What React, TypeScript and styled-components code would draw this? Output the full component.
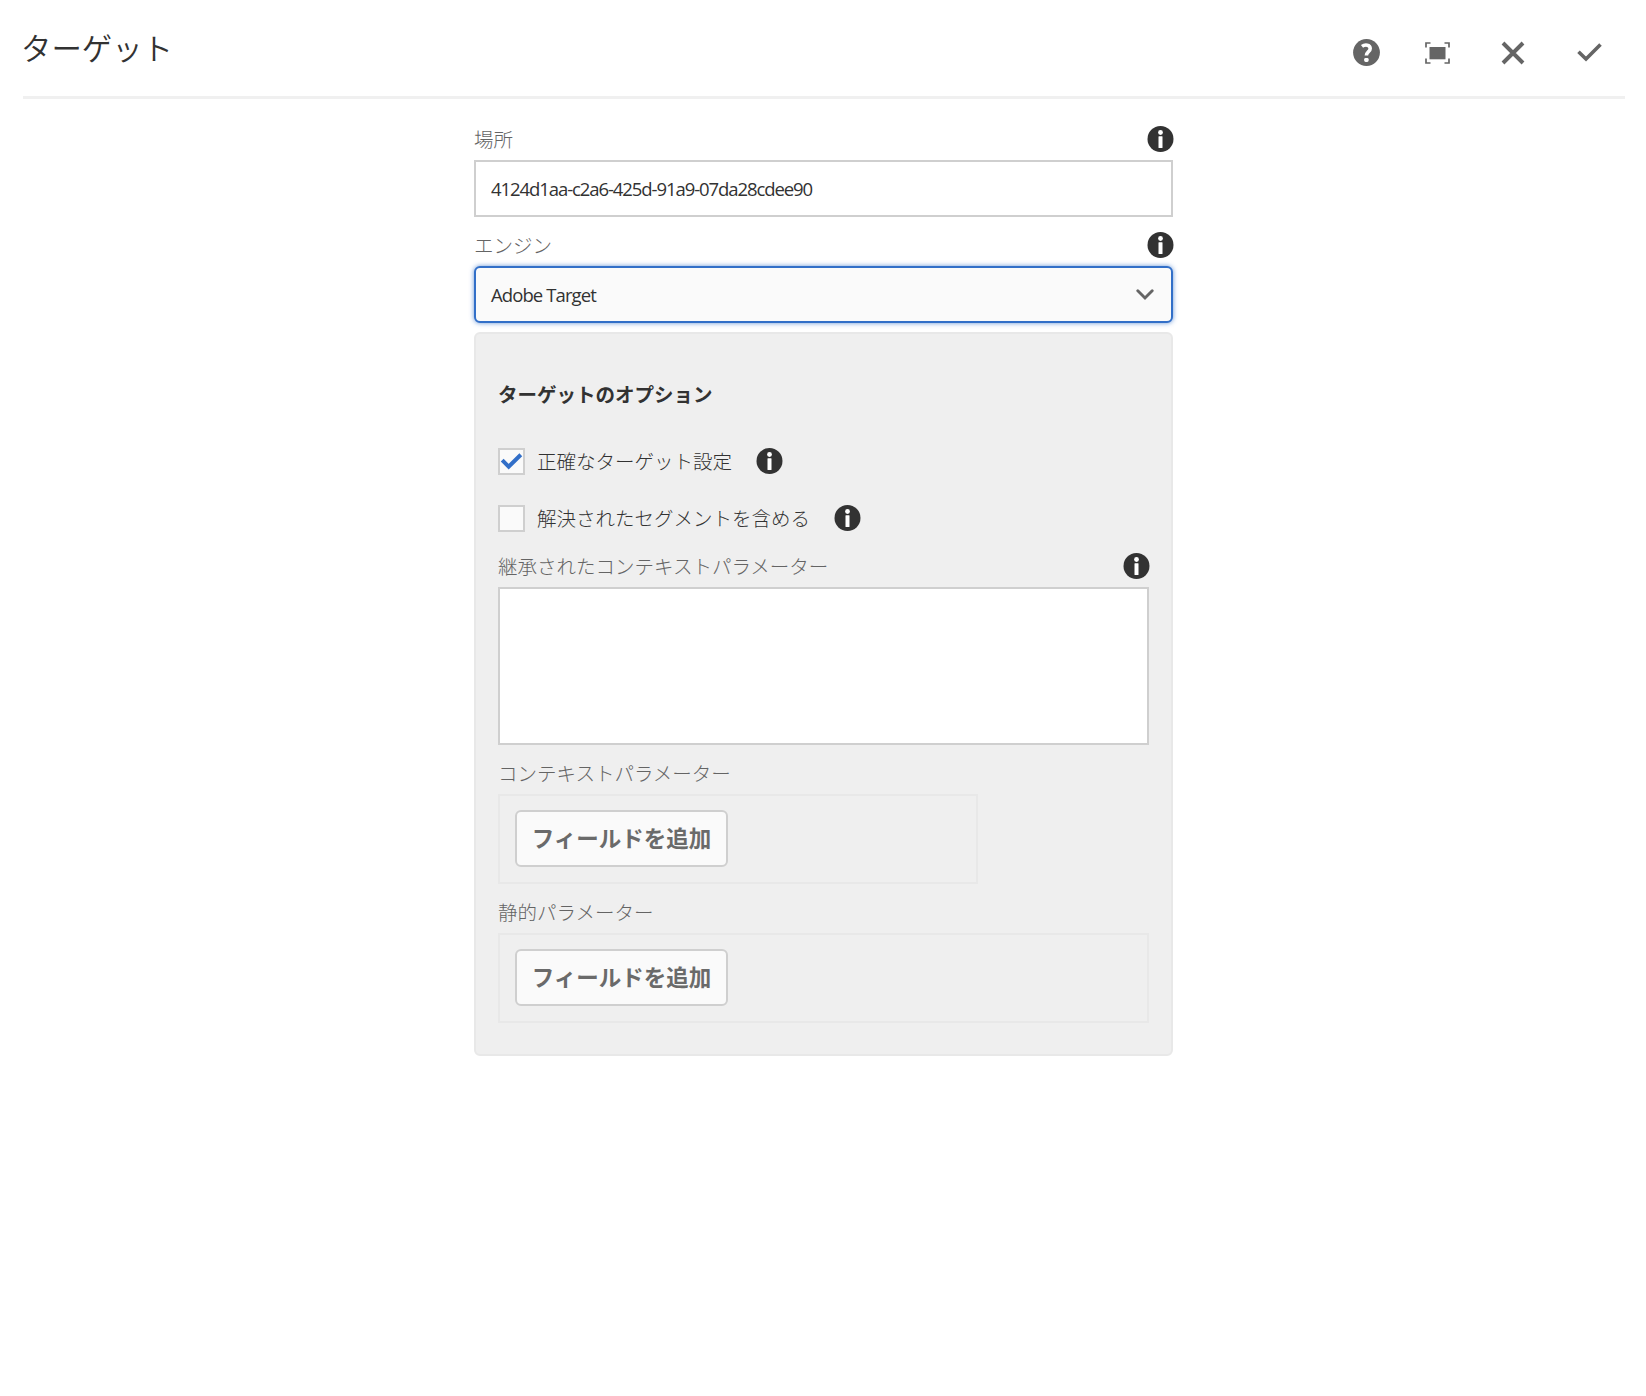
import React from "react";
import styled, { createGlobalStyle } from "styled-components";

const cjk = `"Noto Sans CJK JP", sans-serif`;

const GlobalStyle = createGlobalStyle`
  *, *::before, *::after { box-sizing: border-box; }
  body {
    margin: 0;
    background: #fff;
    color: #323232;
    font-family: ${cjk};
    font-size: 19.5px;
    font-weight: 300;
  }
`;

const Dialog = styled.main`
  min-height: 1396px;
  padding: 0 21px 0 23px;
`;

const Header = styled.header`
  display: flex;
  justify-content: space-between;
  height: 99px;
  border-bottom: 3px solid #f0f0f0;
`;

const Title = styled.h1`
  margin: 25px 0 0 -2px;
  font-size: 30.4px;
  line-height: 44px;
  font-weight: 350;
`;

const Actions = styled.div`
  display: flex;
  align-items: center;
  height: 27px;
  margin: 39px 23px 0 0;
`;

const Action = styled.button<{ $gap?: number }>`
  display: flex;
  padding: 0;
  border: 0;
  background: none;
  color: #656565;
  margin-left: ${(p) => p.$gap ?? 0}px;
`;

const Form = styled.form`
  width: 699px;
  margin-left: 451px;
  padding-top: 20px;
`;

const LabelRow = styled.div<{ $height: number; $after?: number }>`
  display: flex;
  justify-content: space-between;
  align-items: center;
  height: ${(p) => p.$height}px;
  margin: 0 -1px ${(p) => p.$after ?? 0}px 0;
`;

const Label = styled.label`
  color: #646464;
  line-height: 30px;
`;

const TextInput = styled.input`
  display: block;
  width: 100%;
  height: 57px;
  margin-bottom: 8px;
  padding: 0 15px 1px;
  border: 2px solid #cfcfcf;
  border-radius: 0;
  outline: none;
  background: #fff;
  color: #323232;
  font: 400 18.5px "Open Sans", sans-serif;
  letter-spacing: -1.08px;
`;

const Select = styled.button`
  display: flex;
  align-items: center;
  justify-content: space-between;
  width: 100%;
  height: 57px;
  margin-bottom: 9px;
  padding: 0 17px 0 15px;
  border: 2px solid #326fc8;
  border-radius: 6px;
  background: #fafafa;
  box-shadow: 0 0 5px rgba(50, 111, 200, 0.75);
  color: #323232;
  font: 400 18.5px "Open Sans", sans-serif;
  letter-spacing: -0.9px;
`;

const Panel = styled.section`
  height: 724px;
  padding: 0 22px;
  border: 2px solid #e8e8e8;
  border-radius: 6px;
  background: #efefef;
`;

const PanelTitle = styled.h2`
  margin: 0;
  padding-top: 45px;
  height: 114px;
  font-size: 19.5px;
  line-height: 30px;
  font-weight: 700;
`;

const CheckRow = styled.div<{ $after: number }>`
  display: flex;
  align-items: flex-start;
  height: 27px;
  margin-bottom: ${(p) => p.$after}px;
`;

const CheckBox = styled.span`
  display: flex;
  width: 27px;
  height: 27px;
  margin-right: 12px;
  border: 2px solid #cfcfcf;
  background: #fafafa;
`;

const CheckText = styled.span`
  margin-right: 23.5px;
  line-height: 25px;
`;

const TextArea = styled.textarea`
  display: block;
  width: 100%;
  height: 158px;
  border: 2px solid #cfcfcf;
  border-radius: 0;
  background: #fff;
  resize: none;
  outline: none;
`;

const FieldSet = styled.div<{ $width: string }>`
  width: ${(p) => p.$width};
  height: 90px;
  padding: 14px 15px;
  border: 2px solid #e8e8e8;
`;

const AddButton = styled.button`
  width: 213px;
  height: 57px;
  padding: 0 0 4px;
  border: 2px solid #cfcfcf;
  border-radius: 6px;
  background: #fafafa;
  color: #6a6a6a;
  font: 700 22.5px ${cjk};
  white-space: nowrap;
`;

const InfoIcon = () => (
  <svg width="27" height="26" viewBox="0 0 27 26">
    <circle cx="13.5" cy="13" r="13" fill="#323232" />
    <circle cx="13.5" cy="6.5" r="2.4" fill="#fff" />
    <rect x="11.5" y="10.2" width="4" height="11.8" rx="0.5" fill="#fff" />
  </svg>
);

const HelpIcon = () => (
  <svg width="27" height="27" viewBox="0 0 27 27">
    <circle cx="13.5" cy="13.5" r="13.4" fill="currentColor" />
    <path d="M9 7.4C12 5.2 17.2 5.6 17.2 9.4c0 3.3-3.8 3.6-3.8 7.2" fill="none" stroke="#fff" strokeWidth="3.6" />
    <rect x="11.2" y="18.9" width="4.4" height="4" rx="1.4" fill="#fff" />
  </svg>
);

const FullscreenIcon = () => (
  <svg width="25" height="22" viewBox="0 0 25 22">
    <path d="M1 5.5V1h4.5M19.5 1H24v4.5M24 16.5V21h-4.5M5.5 21H1v-4.5" fill="none" stroke="currentColor" strokeWidth="1.7" />
    <rect x="4.5" y="5" width="16" height="12.3" fill="currentColor" />
  </svg>
);

const CloseIcon = () => (
  <svg width="24" height="24" viewBox="0 0 24 24">
    <path d="M2 2l20 20M22 2L2 22" fill="none" stroke="currentColor" strokeWidth="3.9" />
  </svg>
);

const DoneIcon = () => (
  <svg width="25" height="19" viewBox="0 0 25 19">
    <path d="M1.5 8.8l7.5 7.2L23.5 1.5" fill="none" stroke="currentColor" strokeWidth="3.6" />
  </svg>
);

const ChevronIcon = () => (
  <svg width="18" height="12" viewBox="0 0 18 12">
    <path d="M1.8 1.8L9 9l7.2-7.2" fill="none" stroke="#656565" strokeWidth="2.9" strokeLinecap="round" />
  </svg>
);

const CheckIcon = () => (
  <svg width="23" height="23" viewBox="0 0 23 23">
    <path d="M2.2 10.2l6.5 6.5L20.8 4.8" fill="none" stroke="#326fc8" strokeWidth="4" />
  </svg>
);

export default function App() {
  return (
    <Dialog>
      <GlobalStyle />
      <Header>
        <Title>ターゲット</Title>
        <Actions>
          <Action type="button" aria-label="help"><HelpIcon /></Action>
          <Action type="button" aria-label="fullscreen" $gap={45}><FullscreenIcon /></Action>
          <Action type="button" aria-label="close" $gap={51}><CloseIcon /></Action>
          <Action type="button" aria-label="done" $gap={52}><DoneIcon /></Action>
        </Actions>
      </Header>
      <Form>
        <LabelRow $height={40} $after={1}>
          <Label>場所</Label>
          <InfoIcon />
        </LabelRow>
        <TextInput defaultValue="4124d1aa-c2a6-425d-91a9-07da28cdee90" />
        <LabelRow $height={40} $after={1}>
          <Label>エンジン</Label>
          <InfoIcon />
        </LabelRow>
        <Select type="button">
          Adobe Target
          <ChevronIcon />
        </Select>
        <Panel>
          <PanelTitle>ターゲットのオプション</PanelTitle>
          <CheckRow $after={30}>
            <CheckBox><CheckIcon /></CheckBox>
            <CheckText>正確なターゲット設定</CheckText>
            <InfoIcon />
          </CheckRow>
          <CheckRow $after={14}>
            <CheckBox />
            <CheckText>解決されたセグメントを含める</CheckText>
            <InfoIcon />
          </CheckRow>
          <LabelRow $height={39} $after={2}>
            <Label>継承されたコンテキストパラメーター</Label>
            <InfoIcon />
          </LabelRow>
          <TextArea />
          <LabelRow $height={56} $after={-7}>
            <Label>コンテキストパラメーター</Label>
          </LabelRow>
          <FieldSet $width="480px">
            <AddButton type="button">フィールドを追加</AddButton>
          </FieldSet>
          <LabelRow $height={56} $after={-7}>
            <Label>静的パラメーター</Label>
          </LabelRow>
          <FieldSet $width="100%">
            <AddButton type="button">フィールドを追加</AddButton>
          </FieldSet>
        </Panel>
      </Form>
    </Dialog>
  );
}
